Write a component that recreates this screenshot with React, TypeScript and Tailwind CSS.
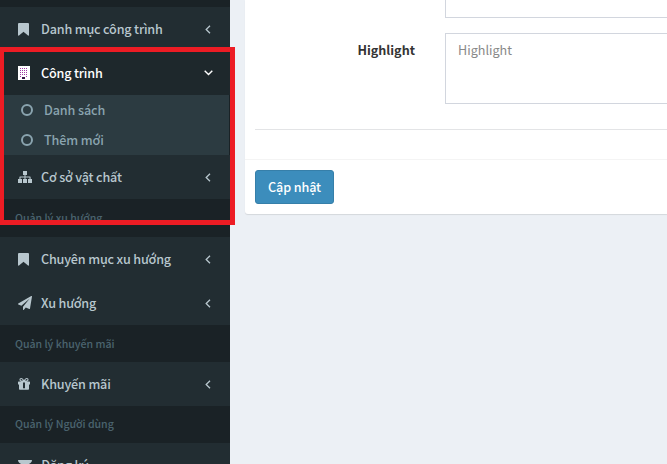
import type { ReactNode } from "react";

const Bookmark = () => (
  <svg width="11" height="13" viewBox="0 0 11 13" className="block" fill="currentColor">
    <path d="M1 0h9q1 0 1 1v11q0 1-1 .6L5.500 8.800 1 12.600q-1 .4-1-.6V1q0-1 1-1z" />
  </svg>
);

const Building = () => (
  <svg width="12" height="14" viewBox="0 0 12 14" className="block" shapeRendering="crispEdges">
    <path fill="#fff" d="M0 0h12v14H0z" />
    <g fill="#a13aa5">
      {[2, 4, 6, 8].map((y) => [2, 4, 6, 8].map((x) => <path key={`${x}-${y}`} d={`M${x} ${y}h1v1h-1z`} />))}
      <path d="M2 10h1v1H2zM8 10h1v1H8z" />
    </g>
    <path fill="#351746" d="M4 11h3v2H4z" />
  </svg>
);

const Sitemap = () => (
  <svg width="14" height="12" viewBox="0 0 14 12" className="block" fill="currentColor">
    <path d="M5 0h4v4H7.500v1.500H12q.6 0 .6.600V8H14v4h-4V8h1.500V6.500h-4V8H9v4H5V8h1.500V6.500h-4V8H4v4H0V8h1.400V6.100q0-.6.600-.6h4.500V4H5z" />
  </svg>
);

const Plane = () => (
  <svg width="14" height="14" viewBox="0 0 1792 1792" className="block" fill="currentColor">
    <path d="M1764 11q33 24 27 64l-256 1536q-5 29-32 45-14 8-31 8-11 0-24-5l-453-185-242 295q-18 23-49 23-13 0-22-4-19-7-30.500-23.500t-11.500-36.500v-349l864-1059-1069 925-395-162q-37-14-40-55-2-40 32-59L1696 9q15-9 32-9 20 0 36 11z" />
  </svg>
);

const Gift = () => (
  <svg width="12" height="12" viewBox="0 0 12 12" className="block" fill="currentColor">
    <path fillRule="evenodd" d="M0 4q0-.6.600-.6H3.500Q1.400 3.200 1.400 1.700 1.400 0 3.200 0 4.500 0 6 2 7.500 0 8.800 0q1.800 0 1.800 1.700 0 1.500-2.100 1.700h2.900q.6 0 .6.600v2.500h-1V11q0 .8-.8.800H1.800Q1 11.800 1 11V6.500H0zM3.200 1.100q-.7 0-.7.600 0 .7.800.7H5Q3.900 1.100 3.200 1.100zm5.600 0Q8.100 1.100 7 2.400h1.700q.8 0 .8-.7 0-.6-.7-.6zM5 4.400v5.900h2V4.400z" />
  </svg>
);

const Envelope = () => (
  <svg width="14" height="10" viewBox="0 0 14 10" className="block" fill="currentColor">
    <path d="M0 0h14q0 2-1.500 3L7 6.500 1.500 3Q0 2 0 0zM0 5l7 3.500L14 5v5H0z" />
  </svg>
);

const Chevron = ({ open = false }: { open?: boolean }) =>
  open ? (
    <svg width="9" height="6" viewBox="0 0 9 6" className="mr-[17px] block" fill="none" stroke="currentColor" strokeWidth="1.400">
      <path d="M.7.8 4.500 4.600 8.300.8" />
    </svg>
  ) : (
    <svg width="6" height="9" viewBox="0 0 6 9" className="mr-[19px] block" fill="none" stroke="currentColor" strokeWidth="1.300">
      <path d="M5 .7 1.200 4.500 5 8.300" />
    </svg>
  );

type ItemProps = { icon: ReactNode; label: string; active?: boolean; arrow?: boolean };

const Item = ({ icon, label, active = false, arrow = true }: ItemProps) => (
  <div className={`flex h-[44px] shrink-0 items-center pl-[18px] ${active ? "bg-[#1e282c] text-white" : "bg-[#222d32] text-[#b8c7ce]"}`}>
    <span className="w-[23px] shrink-0">{icon}</span>
    <span className="flex-1 tracking-[-0.17px] whitespace-nowrap">{label}</span>
    {arrow && <Chevron open={active} />}
  </div>
);

const Header = ({ children, height = "h-[37px]" }: { children: string; height?: string }) => (
  <div className={`flex shrink-0 items-center pl-[15px] text-[10.600px] font-medium tracking-[-0.03px] whitespace-nowrap text-[#4b646f] ${height}`}>{children}</div>
);

const SubItem = ({ children }: { children: string }) => (
  <div className="flex h-[30px] items-center pl-[21px] tracking-[-0.12px] text-[#8aa4af]">
    <span className="mr-[11px] size-[12px] rounded-full border-2 border-current" />
    {children}
  </div>
);

export default function App() {
  return (
    <div className="relative flex h-[464px] w-[667px] overflow-hidden bg-[#ecf0f5] font-['Noto_Sans_CJK_SC','Noto_Sans',sans-serif] text-[12.600px] leading-[20px]">
      <nav className="flex w-[230px] shrink-0 flex-col bg-[#1a2226] pt-[7px] font-medium">
        <Item icon={<Bookmark />} label="Danh mục công trình" />
        <Item icon={<Building />} label="Công trình" active />
        <div className="mr-px shrink-0 bg-[#2c3b41]">
          <SubItem>Danh sách</SubItem>
          <SubItem>Thêm mới</SubItem>
        </div>
        <Item icon={<Sitemap />} label="Cơ sở vật chất" />
        <Header height="h-[38px]">Quản lý xu hướng</Header>
        <Item icon={<Bookmark />} label="Chuyên mục xu hướng" />
        <Item icon={<Plane />} label="Xu hướng" />
        <Header>Quản lý khuyến mãi</Header>
        <Item icon={<Gift />} label="Khuyến mãi" />
        <Header height="h-[37px] pb-px">Quản lý Người dùng</Header>
        <Item icon={<Envelope />} label="Đăng ký" arrow={false} />
      </nav>
      <main className="min-w-0 flex-1 pl-[15px]">
        <section className="h-[214px] rounded-bl-[3px] bg-white shadow-[0_1px_1px_rgba(0,0,0,0.1)]">
          <div className="h-[159px] pl-[10px]">
            <div className="ml-[190px] h-[18px] border-b border-l border-[#d2d6de]" />
            <div className="mt-[15px] flex">
              <div className="w-[190px] pt-[7px] pr-[30px] text-right font-bold text-[#333]">Highlight</div>
              <div className="h-[71px] flex-1 border-y border-l border-[#d2d6de] pt-[6px] pl-[12px] text-[#888]">Highlight</div>
            </div>
            <hr className="mt-[25px] border-0 border-t border-[#e3e4e6]" />
          </div>
          <footer className="border-t border-[#f4f4f4] pt-[10px] pl-[10px]">
            <button className="h-[34px] w-[79px] rounded-[3px] border border-[#367fa9] bg-[#3c8dbc] text-center font-medium tracking-[-0.1px] whitespace-nowrap text-white">Cập nhật</button>
          </footer>
        </section>
      </main>
      <div className="absolute top-[47px] left-[-1px] h-[178px] w-[236px] border-[5px] border-[#ed1c24]" />
    </div>
  );
}
